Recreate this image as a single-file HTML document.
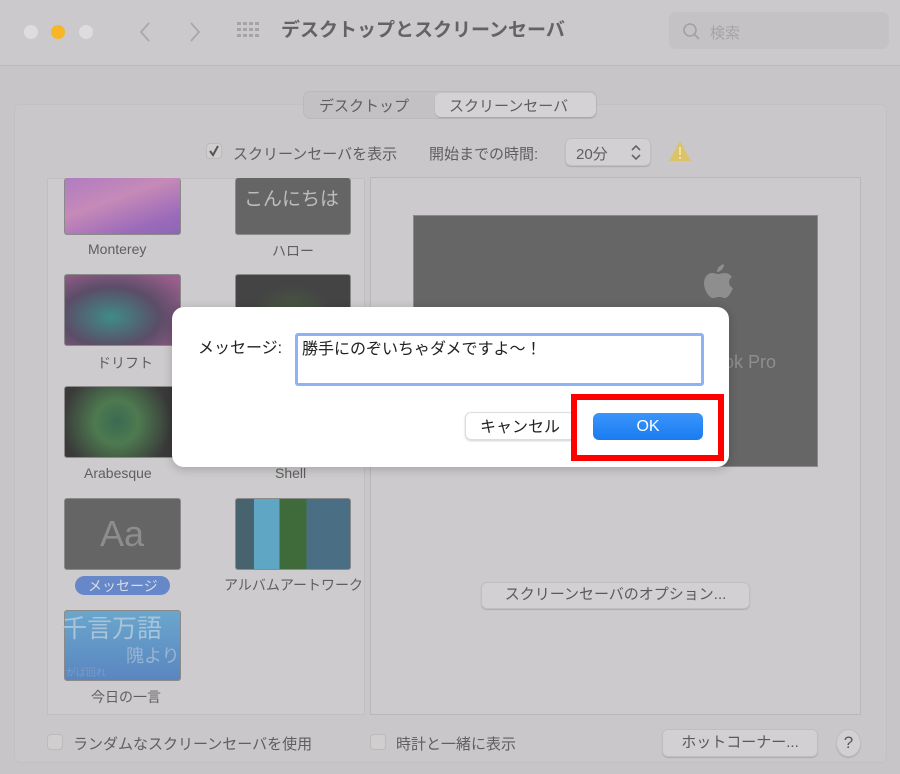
<!DOCTYPE html>
<html><head><meta charset="utf-8"><style>
*{margin:0;padding:0;box-sizing:border-box}
body{width:900px;height:774px;overflow:hidden;background:#c7c5c7;font-family:"Liberation Sans","Noto Sans CJK JP",sans-serif;color:#5f5f5f;position:relative}
.a{position:absolute}
.t{position:absolute;white-space:nowrap;font-size:14px}
.th{position:absolute;border-radius:3px;border:1px solid #8a8a8a;overflow:hidden}
.btn{position:absolute;background:#d2d0d2;border-radius:6px;box-shadow:0 1px 1px rgba(0,0,0,.15);border:1px solid #c0bec0;font-size:15px;text-align:center;color:#5a5a5a}
.cb{position:absolute;width:16px;height:16px;border-radius:4px;background:#d0cecf;border:1px solid #bcbabc}
</style></head><body>
<div class="a" style="left:0;top:0;width:900px;height:66px;background:#cbc9cb;border-bottom:1px solid #bbb9bb"></div>
<div class="a" style="left:24px;top:25px;width:14px;height:14px;border-radius:50%;background:#dedcde"></div>
<div class="a" style="left:51px;top:25px;width:14px;height:14px;border-radius:50%;background:#f6b626"></div>
<div class="a" style="left:79px;top:25px;width:14px;height:14px;border-radius:50%;background:#dedcde"></div>
<svg class="a" style="left:135px;top:20px" width="70" height="24"><path d="M14 3 L6 12 L14 21" stroke="#a9a7a9" stroke-width="1.8" fill="none"/><path d="M56 3 L64 12 L56 21" stroke="#a9a7a9" stroke-width="1.8" fill="none"/></svg>
<svg class="a" style="left:237px;top:22px" width="22" height="20"><g fill="#a5a3a5"><rect x="0" y="0" width="4" height="3"/><rect x="6" y="0" width="4" height="3"/><rect x="12" y="0" width="4" height="3"/><rect x="18" y="0" width="4" height="3"/><rect x="0" y="6" width="4" height="3"/><rect x="6" y="6" width="4" height="3"/><rect x="12" y="6" width="4" height="3"/><rect x="18" y="6" width="4" height="3"/><rect x="0" y="12" width="4" height="3"/><rect x="6" y="12" width="4" height="3"/><rect x="12" y="12" width="4" height="3"/><rect x="18" y="12" width="4" height="3"/></g></svg>
<div class="t" style="left:281px;top:19px;font-size:19px;line-height:24px;font-weight:bold;color:#646264">デスクトップとスクリーンセーバ</div>
<div class="a" style="left:669px;top:12px;width:220px;height:37px;border-radius:7px;background:#c4c2c4"></div>
<svg class="a" style="left:682px;top:22px" width="20" height="20"><circle cx="8" cy="8" r="6" stroke="#a2a0a2" stroke-width="1.6" fill="none"/><path d="M12.5 12.5 L17 17" stroke="#a2a0a2" stroke-width="1.8"/></svg>
<div class="t" style="left:710px;top:22px;font-size:15px;color:#a6a4a6">検索</div>

<div class="a" style="left:14px;top:104px;width:873px;height:659px;border-radius:6px;background:#c9c7c9;border:1px solid #c2c0c2"></div>
<div class="a" style="left:303px;top:91px;width:294px;height:28px;border-radius:7px;background:#c3c1c3;border:1px solid #bbb9bb"></div>
<div class="a" style="left:435px;top:93px;width:161px;height:24px;border-radius:6px;background:#d4d2d4;box-shadow:0 1px 1px rgba(0,0,0,.15)"></div>
<div class="t" style="left:319px;top:95px;font-size:15px">デスクトップ</div>
<div class="t" style="left:449px;top:95px;font-size:15px">スクリーンセーバ</div>

<div class="cb" style="left:206px;top:143px"></div>
<svg class="a" style="left:206px;top:143px" width="16" height="16"><path d="M4 8 L7 12 L12 3" stroke="#555" stroke-width="2" fill="none"/></svg>
<div class="t" style="left:233px;top:143px;font-size:15px">スクリーンセーバを表示</div>
<div class="t" style="left:429px;top:143px;font-size:15px">開始までの時間:</div>
<div class="btn" style="left:565px;top:138px;width:86px;height:28px"></div>
<div class="t" style="left:576px;top:143px;font-size:15px">20分</div>
<svg class="a" style="left:630px;top:144px" width="12" height="18"><path d="M2 6 L6 2 L10 6 M2 11 L6 15 L10 11" stroke="#666" stroke-width="1.6" fill="none"/></svg>
<svg class="a" style="left:668px;top:140px" width="24" height="22"><path d="M12 1 L23 21 L1 21 Z" fill="#dcc36a"/><rect x="11" y="7" width="2" height="8" fill="#eee0a8"/><rect x="11" y="17" width="2" height="2" fill="#eee0a8"/></svg>

<div class="a" style="left:47px;top:178px;width:318px;height:537px;background:#cdcbcd;border:1px solid #c0bec0"></div>
<div class="a" style="left:370px;top:177px;width:491px;height:538px;background:#cccacc;border:1px solid #b9b7b9"></div>

<div class="th" style="left:64px;top:178px;width:117px;height:57px;background:linear-gradient(160deg,#b07cc0,#c68ab8 40%,#9a6aba 80%,#8c66b8);border-top:none"></div>
<div class="t" style="left:88px;top:241px">Monterey</div>
<div class="th" style="left:235px;top:178px;width:116px;height:57px;background:#656565;border-top:none"></div>
<div class="t" style="left:244px;top:188px;font-size:19px;line-height:24px;color:#bdbdbd">こんにちは</div>
<div class="t" style="left:272px;top:241px">ハロー</div>

<div class="th" style="left:64px;top:274px;width:117px;height:72px;background:radial-gradient(ellipse at 40% 60%,#3f8c86,#5b4d68 50%,#9a5e8c 90%)"></div>
<div class="t" style="left:97px;top:353px">ドリフト</div>
<div class="th" style="left:235px;top:274px;width:116px;height:72px;background:radial-gradient(ellipse at 50% 90%,#4c6d3c,#444 60%)"></div>

<div class="th" style="left:64px;top:386px;width:117px;height:72px;background:radial-gradient(circle at 45% 50%,#3a6a52,#4e7a50 30%,#3a3a3a 75%)"></div>
<div class="t" style="left:84px;top:465px">Arabesque</div>
<div class="t" style="left:275px;top:465px">Shell</div>

<div class="th" style="left:64px;top:498px;width:117px;height:72px;background:#656565"></div>
<div class="t" style="left:100px;top:514px;font-size:36px;line-height:40px;color:#8d8d8d">Aa</div>
<div class="a" style="left:75px;top:576px;width:95px;height:19px;border-radius:10px;background:#6688c8"></div>
<div class="t" style="left:88px;top:576px;color:#d8dcea">メッセージ</div>
<div class="th" style="left:235px;top:498px;width:116px;height:72px;background:linear-gradient(90deg,#47636e 0 16%,#5fa6c4 16% 38%,#3f6a3a 38% 62%,#4a6e84 62% 100%)"></div>
<div class="t" style="left:224px;top:575px">アルバムアートワーク</div>

<div class="th" style="left:64px;top:610px;width:117px;height:71px;background:linear-gradient(#6aa6cc,#5a86c0)"></div>
<div class="t" style="left:62px;top:614px;font-size:25px;line-height:30px;color:#a8c4da">千言万語</div>
<div class="t" style="left:126px;top:645px;font-size:18px;line-height:22px;color:#9ab4d4">隗より</div>
<div class="t" style="left:66px;top:664px;font-size:10px;color:#7a9cc8">がば回れ</div>
<div class="t" style="left:91px;top:687px">今日の一言</div>

<div class="a" style="left:413px;top:215px;width:405px;height:252px;background:#666;border:1px solid #8a8a8a"></div>
<svg class="a" style="left:702px;top:262px" width="32" height="38"><path d="M22 2 C22 7 18 10 15 10 C15 6 18 3 22 2 Z M16 12 C18 12 20 11 23 11 C27 11 29 14 30 15 C26 17 26 24 31 26 C29 31 26 36 23 36 C21 36 20 35 17 35 C14 35 13 36 11 36 C7 36 2 28 2 21 C2 15 6 11 10 11 C13 11 14 12 16 12 Z" fill="#8e8e8e"/></svg>
<div class="t" style="left:668px;top:351px;font-size:18px;line-height:22px;color:#8e8e8e">MacBook Pro</div>

<div class="btn" style="left:481px;top:582px;width:269px;height:27px;line-height:24px">スクリーンセーバのオプション...</div>

<div class="cb" style="left:47px;top:734px"></div>
<div class="t" style="left:73px;top:733px;font-size:15px">ランダムなスクリーンセーバを使用</div>
<div class="cb" style="left:370px;top:734px"></div>
<div class="t" style="left:396px;top:733px;font-size:15px">時計と一緒に表示</div>
<div class="btn" style="left:662px;top:729px;width:156px;height:28px;line-height:25px">ホットコーナー...</div>
<div class="btn" style="left:836px;top:729px;width:25px;height:28px;border-radius:50%;line-height:25px;font-size:17px">?</div>

<div class="a" style="left:172px;top:307px;width:557px;height:160px;background:#fff;border-radius:12px;box-shadow:0 2px 10px rgba(0,0,0,.2)"></div>
<div class="t" style="left:198px;top:339px;font-size:16px;line-height:20px;color:#222">メッセージ:</div>
<div class="a" style="left:295px;top:333px;width:409px;height:53px;border:3px solid #8db3f6;border-radius:3px;background:#fff"></div>
<div class="t" style="left:302px;top:340px;font-size:16px;line-height:20px;color:#222">勝手にのぞいちゃダメですよ～！</div>
<div class="a" style="left:465px;top:412px;width:110px;height:28px;border-radius:6px;background:#fff;border:1px solid #ddd;box-shadow:0 1px 2px rgba(0,0,0,.18)"></div>
<div class="t" style="left:465px;top:416px;width:110px;text-align:center;font-size:16px;line-height:20px;color:#222;padding-top:2px">キャンセル</div>
<div class="a" style="left:571px;top:394px;width:153px;height:67px;border:6px solid #f00"></div>
<div class="a" style="left:593px;top:413px;width:110px;height:27px;border-radius:6px;background:linear-gradient(#3a95fb,#1a7bf1)"></div>
<div class="t" style="left:593px;top:417px;width:110px;text-align:center;font-size:16px;line-height:20px;color:#fff">OK</div>
</body></html>
